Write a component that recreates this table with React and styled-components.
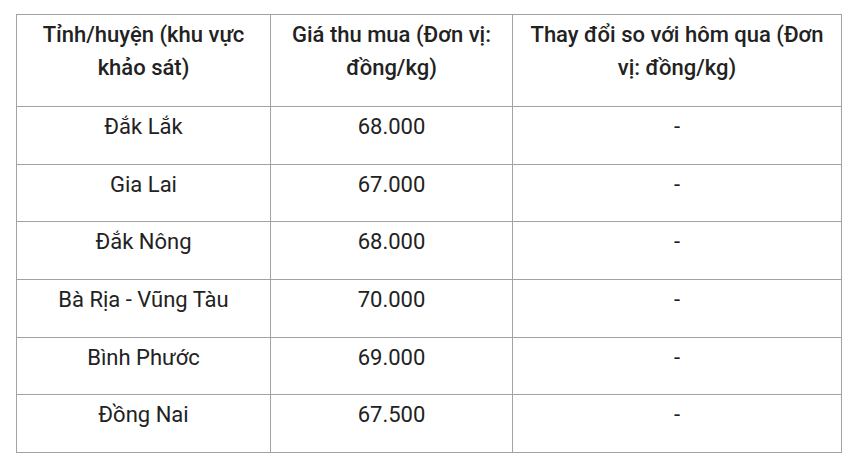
import React from 'react';
import styled, { createGlobalStyle } from 'styled-components';

const GlobalStyle = createGlobalStyle`
  html, body {
    margin: 0;
    padding: 0;
    background: #fff;
  }
  body {
    font-family: Roboto, "Liberation Sans", Arial, sans-serif;
    color: #222;
  }
`;

const Page = styled.div`
  padding: 14px 14px 0 16px;
`;

const Table = styled.table`
  width: 825px;
  border-collapse: collapse;
  table-layout: fixed;
  font-size: 22px;
  line-height: 33px;
`;

const Th = styled.th`
  border: 1px solid #a3a3a3;
  padding: 3px 8px 22px;
  font-weight: 500;
  text-align: center;
  vertical-align: top;
`;

const Td = styled.td`
  border: 1px solid #a3a3a3;
  padding: 3px 8px 20.7px;
  text-align: center;
  vertical-align: top;
  height: 33px;
`;

const rows = [
  ['Đắk Lắk', '68.000', '-'],
  ['Gia Lai', '67.000', '-'],
  ['Đắk Nông', '68.000', '-'],
  ['Bà Rịa - Vũng Tàu', '70.000', '-'],
  ['Bình Phước', '69.000', '-'],
  ['Đồng Nai', '67.500', '-'],
];

export default function App() {
  return (
    <Page>
      <GlobalStyle />
      <Table>
        <colgroup>
          <col style={{ width: 254 }} />
          <col style={{ width: 242 }} />
          <col style={{ width: 329 }} />
        </colgroup>
        <thead>
          <tr>
            <Th>Tỉnh/huyện (khu vực khảo sát)</Th>
            <Th>Giá thu mua (Đơn vị: đồng/kg)</Th>
            <Th>Thay đổi so với hôm qua (Đơn vị: đồng/kg)</Th>
          </tr>
        </thead>
        <tbody>
          {rows.map((r) => (
            <tr key={r[0]}>
              {r.map((c, i) => (
                <Td key={i}>{c}</Td>
              ))}
            </tr>
          ))}
        </tbody>
      </Table>
    </Page>
  );
}
